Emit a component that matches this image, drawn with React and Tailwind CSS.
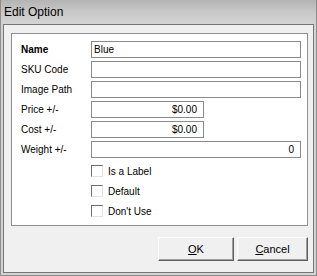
const fields = [
  { label: 'Name', value: 'Blue', bold: true, align: 'left', short: false },
  { label: 'SKU Code', value: '', align: 'left', short: false },
  { label: 'Image Path', value: '', align: 'left', short: false },
  { label: 'Price +/-', value: '$0.00', align: 'right', short: true },
  { label: 'Cost +/-', value: '$0.00', align: 'right', short: true },
  { label: 'Weight +/-', value: '0', align: 'right', short: false },
];

const checks = ['Is a Label', 'Default', "Don't Use"];

function Field({ label, value, bold, align, short }) {
  return (
    <div className="flex items-center h-[17px]">
      <div className={`w-[79px] shrink-0 pl-[9px] ${bold ? 'font-bold' : ''}`}>{label}</div>
      <div
        className={`h-[17px] border border-[#8a8a8a] bg-white flex items-center px-[2px] ${short ? 'w-[113px]' : 'w-[210px]'} ${align === 'right' ? 'justify-end pr-[6px]' : ''}`}
      >
        {value}
      </div>
    </div>
  );
}

function Check({ label }) {
  return (
    <div className="flex items-center h-[12px] pl-[79px]">
      <div className="w-[12px] h-[12px] bg-white border-t border-l border-t-[#6e6e6e] border-l-[#6e6e6e] border-r border-b border-r-[#e2e2e2] border-b-[#e2e2e2]" />
      <span className="ml-[5px]">{label}</span>
    </div>
  );
}

function Button({ children, w }) {
  return (
    <div
      className={`${w} h-[24px] flex items-center justify-center bg-[#f0f0f0] border border-t-white border-l-white border-r-[#5e5e5e] border-b-[#5e5e5e] shadow-[inset_-1px_-1px_0_#a0a0a0]`}
    >
      {children}
    </div>
  );
}

export default function App() {
  return (
    <div
      className="w-[317px] h-[276px] flex flex-col bg-[#d2d2d2] border-l border-r border-b border-[#8d8d8d] text-black"
      style={{ fontFamily: '"Liberation Sans", Arial, sans-serif' }}
    >
      {/* title bar */}
      <div className="h-[24px] shrink-0 flex items-center pl-[3px] text-[12px] bg-gradient-to-b from-[#b4b4b4] via-[#c8c8c8] to-[#d4d4d4]">
        Edit Option
      </div>

      <div className="flex-1 mx-[2px] mb-[2px] border border-[#767676] bg-[#f0f0f0] flex flex-col text-[10px]">
        {/* group panel */}
        <div className="mt-[8px] ml-[7px] w-[297px] h-[193px] border border-[#8e8e8e] bg-white flex flex-col pt-[7px] gap-[3px]">
          {fields.map(f => (
            <Field key={f.label} {...f} />
          ))}
          <div className="flex flex-col gap-[8px] mt-[4px]">
            {checks.map(c => (
              <Check key={c} label={c} />
            ))}
          </div>
        </div>

        <div className="flex justify-end gap-[3px] mt-[11px] pr-[5px] text-[11px]">
          <Button w="w-[76px]">
            <span><u>O</u>K</span>
          </Button>
          <Button w="w-[71px]">
            <span><u>C</u>ancel</span>
          </Button>
        </div>
      </div>
    </div>
  );
}
